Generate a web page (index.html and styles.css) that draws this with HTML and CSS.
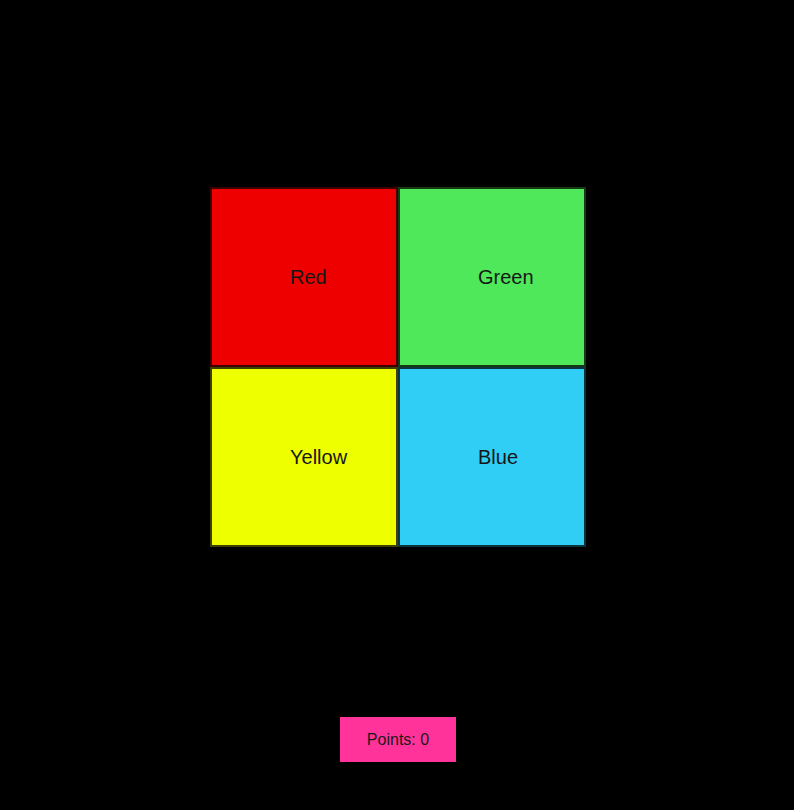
FILE: index.html
```html
<!DOCTYPE html>
<html>
<head>
<meta charset="utf-8">
<link rel="stylesheet" href="styles.css">
</head>
<body>
<main class="page">
  <div class="board">
    <div class="cell red">Red</div>
    <div class="cell green">Green</div>
    <div class="cell yellow">Yellow</div>
    <div class="cell blue">Blue</div>
  </div>
  <div class="points">Points: 0</div>
</main>
</body>
</html>
```
FILE: styles.css
```css
html, body {
  margin: 0;
  padding: 0;
  background: #000;
}
.page {
  display: flex;
  flex-direction: column;
  align-items: center;
  padding-top: 187px;
  padding-left: 2px;
  font-family: "Liberation Sans", Arial, sans-serif;
}
.board {
  display: grid;
  grid-template-columns: 188px 188px;
  grid-template-rows: 180px 180px;
}
.cell {
  box-sizing: border-box;
  border: 2px solid rgba(0, 0, 0, 0.75);
  display: flex;
  align-items: center;
  padding-left: 78px;
  font-size: 20px;
  color: #161616;
}
.red { background: #ee0000; }
.green { background: #4fe85a; }
.yellow { background: #eeff00; }
.blue { background: #30cdf5; }
.points {
  margin-top: 170px;
  width: 116px;
  height: 45px;
  background: #ff3399;
  color: #1a1a1a;
  font-size: 16px;
  display: flex;
  align-items: center;
  justify-content: center;
}
```
